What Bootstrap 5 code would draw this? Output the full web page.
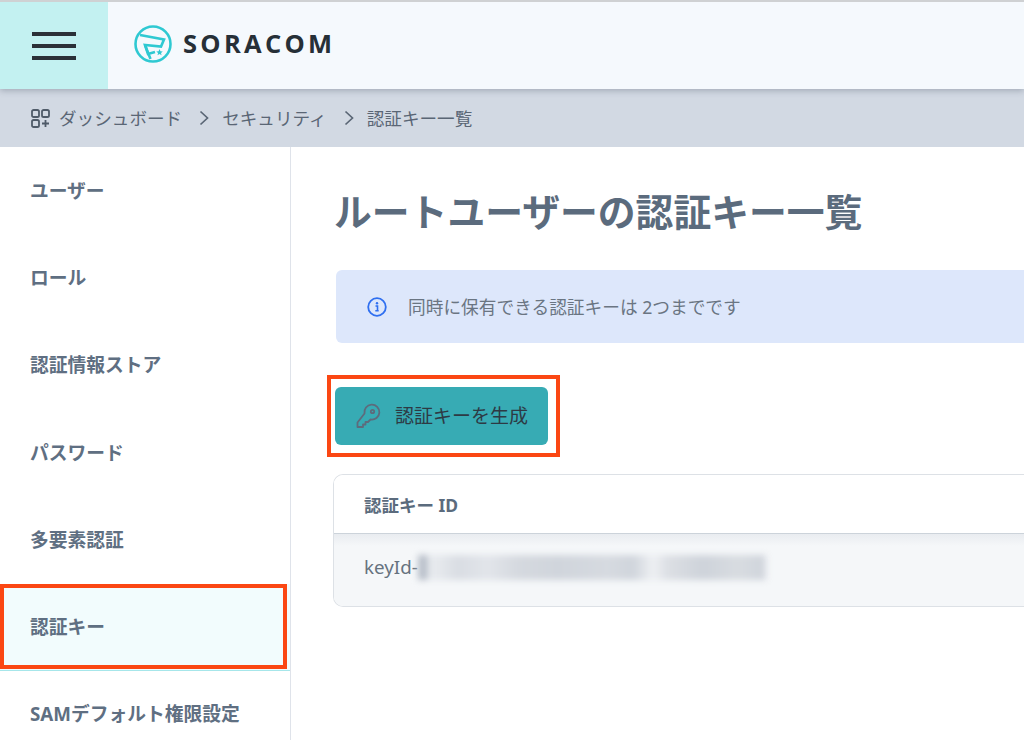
<!DOCTYPE html>
<html lang="ja">
<head>
<meta charset="utf-8">
<title>認証キー一覧</title>
<link href="https://cdn.jsdelivr.net/npm/bootstrap@5.3.0/dist/css/bootstrap.min.css" rel="stylesheet">
<style>
html,body{height:740px;overflow:hidden;background:#fff}
body{font-family:"Noto Sans","Noto Sans CJK JP",sans-serif;color:#5b6b7d;width:1024px}
.shell-top{height:89px;border-top:2px solid #cfd1d3;background:#f5f9fd;box-shadow:0 2px 6px rgba(60,70,90,.3);position:relative;z-index:2}
.burger-cell{width:108px;background:#c3f1f1}
.burger-cell span{display:block;width:44px;height:4px;background:#2a3138}
.logo-cell{padding:0 0 3px 26px}
.logo-word{font-family:"Open Sans","Noto Sans",sans-serif;font-size:25.500px;font-weight:700;letter-spacing:3.300px;color:#262f37;line-height:1;margin-left:3px}
.crumbbar{height:58px;background:#d2d9e3;padding-left:31px;font-size:17.600px;color:#5a6675}
.crumbbar svg{flex:none}
.crumb-first{margin-left:9px}
.crumb-sep{margin:0 13px 0 17px}
.mainrow{height:593px}
.sidecol{width:291px;border-right:1px solid #dfe3ea;flex:none;padding-top:1px}
.sideitem{height:87.200px;padding-left:30px;font-size:18.750px;font-weight:700;color:#5f6f82;position:relative;border-bottom:1px solid transparent}
.sideitem-active{background:#f2fcfd;border-bottom-color:#a6e6ea}
.mark-box{position:absolute;left:0;right:3px;top:0;bottom:1px;border:4px solid #fb4713;pointer-events:none}
.contentcol{padding:0 0 0 43px;min-width:0;flex:1}
.pagetitle{font-size:37.800px;font-weight:700;color:#5b6b7d;margin:41px 0 0;line-height:48px;white-space:nowrap}
.infobox{height:73px;margin:34px -2px 0 2px;background:#dde7fb;border-radius:6px 0 0 6px;padding:1px 0 0 31px;font-size:17.700px;color:#6a7582}
.info-text{margin-left:21px}
.markwrap{display:inline-block;margin:32px 0 0 -7px;border:4px solid #fb4713;padding:8px 8px 8px 4px}
.genbtn{width:213px;height:58px;background:#37abb4;border:0;border-radius:6px;color:#2d3a44;font-size:19px;padding:0 0 0 20px;white-space:nowrap}
.genbtn:hover{background:#37abb4;color:#2d3a44}
.genbtn svg{flex:none}
.gen-label{margin-left:14px}
.keytable{margin:17px -2px 0 -1px;height:133px;border:1px solid #dde1e6;border-right:0;border-radius:10px 0 0 10px;overflow:hidden}
.keyhead{height:59px;padding:3px 0 0 30px;font-size:17.500px;font-weight:700;color:#5b6b7d;border-bottom:1px solid #ccd3da;background:#fff}
.keyrow{height:72px;padding:0 0 6px 30px;font-size:18.800px;color:#66727f;background:linear-gradient(#e9ecf0,#f5f7f9 12px)}
.blurred{display:inline-block;width:350px;height:25px;filter:blur(3px);background:linear-gradient(90deg,#b9c0ca 0 9px,#e6e9ed 10px 20px,#d9dde3 40px,#e2e5ea 70px,#d5d9df 100px,#d0d5dc 140px,#d6dae0 190px,#d0d5dc 215px,#eef0f3 235px,#dcdfe4 250px,#ced3da 285px,#d8dce1 320px,#d0d5dc 345px,#f5f7f9 350px)}
</style>
</head>
<body>
<header class="shell-top d-flex">
  <div class="burger-cell d-flex flex-column align-items-center justify-content-center gap-2"><span></span><span></span><span></span></div>
  <div class="logo-cell d-flex align-items-center gap-2">
    <svg width="38" height="38" viewBox="0 0 38 38" fill="none" stroke="#2fc9d2" stroke-width="2.6"><circle cx="19" cy="19" r="17.5"/><path d="M6 10 L30 14.500 L27 21.500 L11 20 L16.500 34"/><path d="M11 20 L14 29 L21 27"/><path d="M25.500 24l1 2.200 2.300.2-1.800 1.500.6 2.300-2.100-1.200-2 1.200.6-2.300-1.800-1.500 2.300-.2z" fill="#2fc9d2" stroke="none"/></svg>
    <span class="logo-word">SORACOM</span>
  </div>
</header>
<nav class="crumbbar d-flex align-items-center">
  <svg width="19" height="19" viewBox="0 0 19 19" fill="none" stroke="#4f5b69" stroke-width="1.800"><rect x="1" y="1" width="7" height="7" rx="1.600"/><rect x="11" y="1" width="7" height="7" rx="1.600"/><rect x="1" y="11" width="7" height="7" rx="1.600"/><path d="M14.500 11v7M11 14.500h7"/></svg>
  <span class="crumb-first">ダッシュボード</span>
  <svg class="crumb-sep" width="10" height="16" viewBox="0 0 10 16" fill="none" stroke="#5a6675" stroke-width="1.700"><path d="M1.500 1.500 8.500 8 1.500 14.500"/></svg>
  <span>セキュリティ</span>
  <svg class="crumb-sep" width="10" height="16" viewBox="0 0 10 16" fill="none" stroke="#5a6675" stroke-width="1.700"><path d="M1.500 1.500 8.500 8 1.500 14.500"/></svg>
  <span>認証キー一覧</span>
</nav>
<div class="mainrow d-flex">
  <aside class="sidecol">
    <div class="sideitem d-flex align-items-center">ユーザー</div>
    <div class="sideitem d-flex align-items-center">ロール</div>
    <div class="sideitem d-flex align-items-center">認証情報ストア</div>
    <div class="sideitem d-flex align-items-center">パスワード</div>
    <div class="sideitem d-flex align-items-center">多要素認証</div>
    <div class="sideitem sideitem-active d-flex align-items-center">認証キー<div class="mark-box"></div></div>
    <div class="sideitem d-flex align-items-center">SAMデフォルト権限設定</div>
  </aside>
  <main class="contentcol">
    <h1 class="pagetitle">ルートユーザーの認証キー一覧</h1>
    <div class="infobox d-flex align-items-center">
      <svg width="20" height="20" viewBox="0 0 20 20" fill="none"><circle cx="10" cy="10" r="8.800" stroke="#2f6ff0" stroke-width="1.800"/><circle cx="10" cy="6.300" r="1.200" fill="#2f6ff0"/><path d="M8.500 9h2v4.500M8.300 13.800h3.400" stroke="#2f6ff0" stroke-width="1.600"/></svg>
      <span class="info-text">同時に保有できる認証キーは 2つまでです</span>
    </div>
    <div class="markwrap">
      <button type="button" class="btn genbtn d-flex align-items-center">
        <svg width="26" height="26" viewBox="0 0 26 26" fill="none" stroke="#5d6b7c" stroke-width="1.800" stroke-linejoin="round"><path d="M9.500 10.500a7.500 7.500 0 1 1 6 6l-2.500 2.500h-2.500v2.500H8v2.500H2.500v-4.500z"/><circle cx="17.500" cy="8.500" r="1.700"/></svg>
        <span class="gen-label">認証キーを生成</span>
      </button>
    </div>
    <section class="keytable">
      <div class="keyhead d-flex align-items-center">認証キー ID</div>
      <div class="keyrow d-flex align-items-center"><span>keyId-</span><span class="blurred"></span></div>
    </section>
  </main>
</div>
<script src="https://cdn.jsdelivr.net/npm/bootstrap@5.3.0/dist/js/bootstrap.bundle.min.js"></script>
</body>
</html>
